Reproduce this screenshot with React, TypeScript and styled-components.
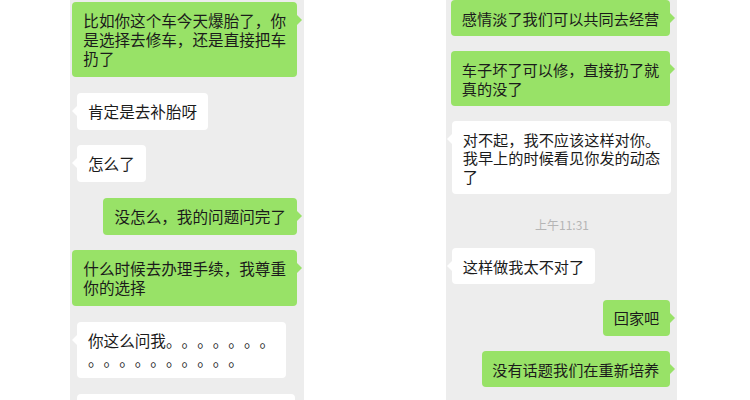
import React from "react";
import styled, { createGlobalStyle } from "styled-components";

const Global = createGlobalStyle`
  html, body { margin: 0; padding: 0; background: #ffffff; }
  body { font-family: "Noto Sans CJK SC", "Noto Sans", sans-serif; }
`;

const Page = styled.div`
  display: flex;
  height: 400px;
  overflow: hidden;
  background: #ffffff;
`;

const Panel = styled.div<{ $fs: number; $left: number; $width: number; $pl: number; $pr: number; $pt: number }>`
  margin-left: ${(p) => p.$left}px;
  width: ${(p) => p.$width}px;
  box-sizing: border-box;
  padding: ${(p) => p.$pt}px ${(p) => p.$pr}px 0 ${(p) => p.$pl}px;
  height: 400px;
  background: #ededed;
  display: flex;
  flex-direction: column;
  gap: 1em;
  font-size: ${(p) => p.$fs}px;
  overflow: hidden;
`;

const Bubble = styled.div<{ $me?: boolean; $fill?: boolean }>`
  position: relative;
  align-self: ${(p) => (p.$fill ? "stretch" : p.$me ? "flex-end" : "flex-start")};
  ${(p) => (p.$fill ? "margin-right: 2px;" : "")}
  flex: none;
  background: ${(p) => (p.$me ? "#98e267" : "#ffffff")};
  color: #1b1b1b;
  border-radius: 4px;
  padding: 0.577em 0.705em;
  line-height: 1.218em;
  white-space: nowrap;
  text-spacing-trim: space-all;
  font-feature-settings: "halt" 0, "palt" 0;
  &::before {
    content: "";
    position: absolute;
    top: 13px;
    ${(p) => (p.$me ? "right: -5px;" : "left: -5px;")}
    border-top: 5px solid transparent;
    border-bottom: 5px solid transparent;
    ${(p) =>
      p.$me
        ? "border-left: 5px solid #98e267;"
        : "border-right: 5px solid #ffffff;"}
  }
`;

const Stamp = styled.div`
  flex: none;
  align-self: center;
  padding-top: 8px;
  font-size: 12px;
  line-height: 16px;
  color: #b5b5b5;
  margin-left: 2px;
`;

type Msg = { me?: boolean; fill?: boolean; lines: string[] } | { stamp: string };

const left: Msg[] = [
  { me: true, lines: ["比如你这个车今天爆胎了，你", "是选择去修车，还是直接把车", "扔了"] },
  { lines: ["肯定是去补胎呀"] },
  { lines: ["怎么了"] },
  { me: true, lines: ["没怎么，我的问题问完了"] },
  { me: true, lines: ["什么时候去办理手续，我尊重", "你的选择"] },
  { lines: ["你这么问我。。。。。。。", "。。。。。。。。。。"] },
  { fill: true, lines: ["\u00a0"] },
];

const right: Msg[] = [
  { me: true, lines: ["感情淡了我们可以共同去经营"] },
  { me: true, lines: ["车子坏了可以修，直接扔了就", "真的没了"] },
  { lines: ["对不起，我不应该这样对你。", "我早上的时候看见你发的动态", "了"] },
  { stamp: "上午11:31" },
  { lines: ["这样做我太不对了"] },
  { me: true, lines: ["回家吧"] },
  { me: true, lines: ["没有话题我们在重新培养"] },
];

const render = (msgs: Msg[]) =>
  msgs.map((m, i) =>
    "stamp" in m ? (
      <Stamp key={i}>{m.stamp}</Stamp>
    ) : (
      <Bubble key={i} $me={m.me} $fill={m.fill}>
        {m.lines.map((l, j) => (
          <React.Fragment key={j}>
            {j > 0 && <br />}
            {l}
          </React.Fragment>
        ))}
      </Bubble>
    )
  );

export default function App() {
  return (
    <>
      <Global />
      <Page>
        <Panel $fs={15.6} $left={70} $width={234} $pl={7} $pr={7} $pt={2}>
          {render(left)}
        </Panel>
        <Panel $fs={15.2} $left={142} $width={231} $pl={6} $pr={7} $pt={0}>
          {render(right)}
        </Panel>
      </Page>
    </>
  );
}
